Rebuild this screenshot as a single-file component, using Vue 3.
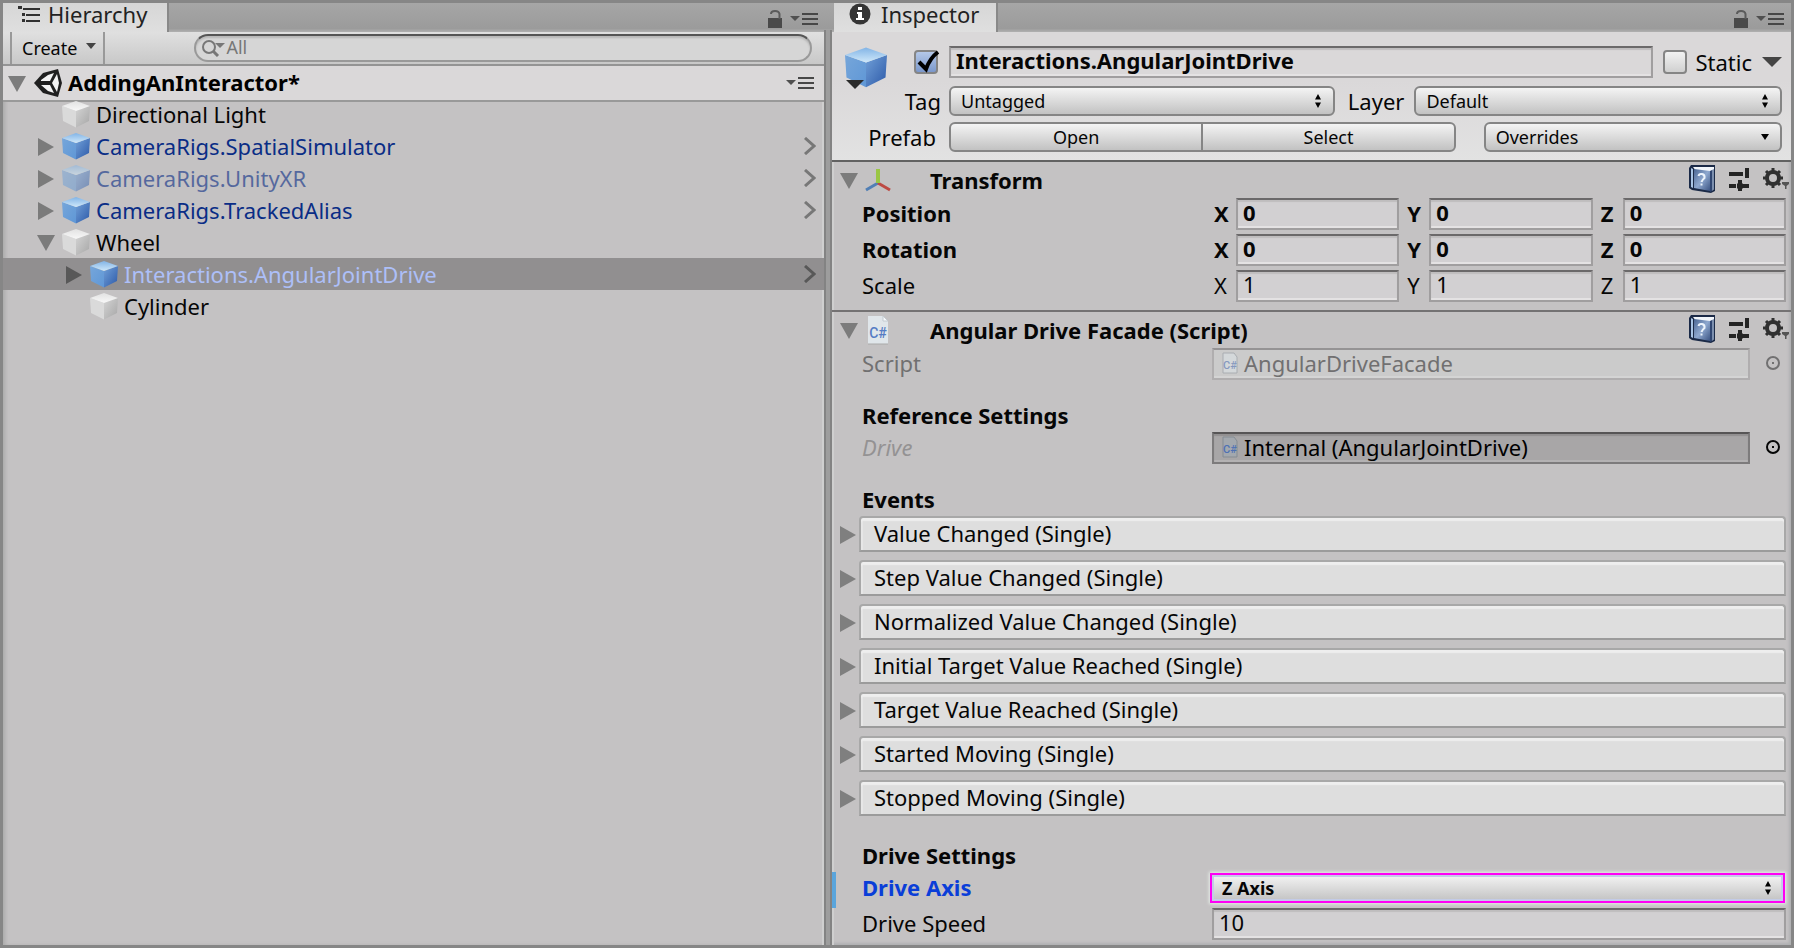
<script setup>
import { ref } from 'vue'

const nodes = [
  { name: 'Directional Light', depth: 0, kind: 'plain', arrow: '' },
  { name: 'CameraRigs.SpatialSimulator', depth: 0, kind: 'prefab', arrow: 'right' },
  { name: 'CameraRigs.UnityXR', depth: 0, kind: 'prefab', arrow: 'right', inactive: true },
  { name: 'CameraRigs.TrackedAlias', depth: 0, kind: 'prefab', arrow: 'right' },
  { name: 'Wheel', depth: 0, kind: 'plain', arrow: 'down' },
  { name: 'Interactions.AngularJointDrive', depth: 1, kind: 'prefab', arrow: 'right', selected: true },
  { name: 'Cylinder', depth: 1, kind: 'plain', arrow: '' },
]

const vectors = ref([
  { label: 'Position', bold: true, axes: { X: '0', Y: '0', Z: '0' } },
  { label: 'Rotation', bold: true, axes: { X: '0', Y: '0', Z: '0' } },
  { label: 'Scale', bold: false, axes: { X: '1', Y: '1', Z: '1' } },
])

const events = [
  'Value Changed (Single)',
  'Step Value Changed (Single)',
  'Normalized Value Changed (Single)',
  'Initial Target Value Reached (Single)',
  'Target Value Reached (Single)',
  'Started Moving (Single)',
  'Stopped Moving (Single)',
]

const objectName = ref('Interactions.AngularJointDrive')
const active = ref(true)
const isStatic = ref(false)
const search = ref('')
const driveSpeed = ref('10')
</script>

<template>
  <div class="editor">
    <svg class="sprite" aria-hidden="true">
      <defs>
        <linearGradient id="blueTop" x1="0" y1="0" x2="0" y2="1"><stop offset="0" stop-color="#82b4e6" /><stop offset="1" stop-color="#cfe8fa" /></linearGradient>
        <linearGradient id="blueLeft" x1="0" y1="0" x2="1" y2="1"><stop offset="0" stop-color="#76a6da" /><stop offset="1" stop-color="#5f97d6" /></linearGradient>
        <linearGradient id="blueRight" x1="0" y1="0" x2="1" y2="1"><stop offset="0" stop-color="#71a0d8" /><stop offset="1" stop-color="#2c59a8" /></linearGradient>
        <linearGradient id="greyTop" x1="0" y1="0" x2="0" y2="1"><stop offset="0" stop-color="#e2e2e2" /><stop offset="1" stop-color="#f8f8f8" /></linearGradient>
        <linearGradient id="greyRight" x1="0" y1="0" x2="1" y2="1"><stop offset="0" stop-color="#d4d4d4" /><stop offset="1" stop-color="#a6a6a6" /></linearGradient>
        <linearGradient id="bookCover" x1="0" y1="0" x2="1" y2="1"><stop offset="0" stop-color="#4a6592" /><stop offset=".5" stop-color="#8ea8cf" /><stop offset="1" stop-color="#3a5382" /></linearGradient>
      </defs>
      <symbol id="cube-prefab" viewBox="0 0 28 28">
        <path d="M0 6 14 11V27.500L1 21Z" fill="url(#blueLeft)" />
        <path d="M28 6 14 11V27.500L27 21Z" fill="url(#blueRight)" />
        <path d="M14 1 28 6 14 11 0 6Z" fill="url(#blueTop)" />
      </symbol>
      <symbol id="cube-plain" viewBox="0 0 28 28">
        <path d="M0 6 14 11V27.500L1 21Z" fill="#dadada" />
        <path d="M28 6 14 11V27.500L27 21Z" fill="url(#greyRight)" />
        <path d="M14 1 28 6 14 11 0 6Z" fill="url(#greyTop)" />
      </symbol>
      <symbol id="fold-right" viewBox="0 0 18 20"><path d="M1 2 17 11 1 20Z" fill="currentColor" /></symbol>
      <symbol id="fold-down" viewBox="0 0 18 20"><path d="M0 3H18L9 19Z" fill="currentColor" /></symbol>
      <symbol id="lock" viewBox="0 0 14 18">
        <path d="M0 8H14V18H0Z" fill="#4a4a4a" /><path d="M3 4Q3 1 7 1T11.500 4V9" fill="none" stroke="#5b5b5b" stroke-width="2" />
      </symbol>
      <symbol id="menu" viewBox="0 0 28 12">
        <path d="M0 3H10L5 8Z" fill="#505050" /><path d="M12 1H28M12 6H28M12 11H28" stroke="#474747" stroke-width="2" />
      </symbol>
      <symbol id="updown" viewBox="0 0 8 14"><path d="M4 0 7 5.500H1ZM4 14 1 8.500H7Z" fill="#000" /></symbol>
      <symbol id="book" viewBox="0 0 26 28">
        <path d="M2 0H26V26L22 28 3 25 0 23V3Z" fill="#1b2a47" />
        <path d="M4 2H25V24L22 26Z" fill="#f2f6fb" />
        <path d="M2 3 4 4V23L2 22Z" fill="#a9c4e4" />
        <path d="M5 4 21 6V26L5 23Z" fill="url(#bookCover)" />
        <path d="M21 6 23 5V26L21 27Z" fill="#2f4570" />
        <path d="M23 5 25 4V24L23 26Z" fill="#7c8fae" />
        <path d="M9.500 11Q10 8.500 13 9T15.500 13Q13 15 12.500 17" fill="none" stroke="#edf4fc" stroke-width="2" />
        <path d="M11.500 18.500H13.500V20.500H11.500Z" fill="#edf4fc" />
      </symbol>
      <symbol id="sliders" viewBox="0 0 20 24">
        <path d="M0 7H14M0 19H7M13 19H20" stroke="#242424" stroke-width="4" />
        <path d="M18 1V11M11 13V24" stroke="#242424" stroke-width="4" /><path d="M8 19H14" stroke="#242424" stroke-width="5" />
      </symbol>
      <symbol id="gear" viewBox="0 0 26 24">
        <circle cx="10" cy="11" r="6" fill="none" stroke="#303030" stroke-width="4" />
        <path d="M10 1V5M10 17V21M0 11H4M16 11H20M3 4 6 7M14 15 17 18M17 4 14 7M6 15 3 18" stroke="#303030" stroke-width="3" />
        <path d="M19 15H26V17L23.500 19V22H22V19L19 17Z" fill="#555" />
      </symbol>
      <symbol id="target" viewBox="0 0 16 16">
        <circle cx="8" cy="8" r="6" fill="none" stroke="currentColor" stroke-width="2" /><path d="M7 7H9V9H7Z" fill="currentColor" />
      </symbol>
    </svg>

    <section class="panel hierarchy" aria-label="Hierarchy">
      <div class="tabbar">
        <button class="tab">
          <svg width="22" height="18" viewBox="0 0 22 18"><path d="M5 4H22M8 10H22M8 16H22" stroke="#303030" stroke-width="2" /><path d="M0 1H4V4H0ZM4 8H7V11H4ZM4 14H7V17H4Z" fill="#303030" /></svg>
          Hierarchy
        </button>
        <span class="tab-tools">
          <button aria-label="Lock"><svg width="14" height="18"><use href="#lock" /></svg></button>
          <button aria-label="Hierarchy menu"><svg width="28" height="12"><use href="#menu" /></svg></button>
        </span>
      </div>
      <div class="toolbar">
        <button class="create">Create <svg width="10" height="6" viewBox="0 0 10 6"><path d="M0 0H10L5 6Z" fill="#444" /></svg></button>
        <label class="search">
          <svg width="24" height="18" viewBox="0 0 24 18"><circle cx="8" cy="8" r="6" fill="none" stroke="#777" stroke-width="2" /><path d="M12 12 17 17" stroke="#777" stroke-width="3" /><path d="M14 4H24L19 9Z" fill="#777" /></svg>
          <input v-model="search" type="text" placeholder="All" aria-label="Search hierarchy" />
        </label>
      </div>
      <div class="scene">
        <button class="fold" aria-label="Collapse scene"><svg width="18" height="20"><use href="#fold-down" /></svg></button>
        <svg width="30" height="30" viewBox="0 0 30 30">
          <path d="M1 15 10 5 25 1 29 15 25 29 10 25Z" fill="#202020" />
          <path d="M8 12 15 7 21 5 17 13H8ZM8 17H17L21 25 15 23ZM19 15 24 6 26 15 24 24Z" fill="#f4f4f4" />
        </svg>
        <h1>AddingAnInteractor*</h1>
        <button class="scene-menu" aria-label="Scene menu"><svg width="28" height="12"><use href="#menu" /></svg></button>
      </div>
      <ul class="tree">
        <li v-for="n in nodes" :key="n.name" :class="[n.kind, { selected: n.selected, inactive: n.inactive, nested: n.depth }]">
          <span class="arrow"><svg v-if="n.arrow" width="18" height="20"><use :href="'#fold-' + n.arrow" /></svg></span>
          <svg class="cube" width="28" height="28"><use :href="'#cube-' + n.kind" /></svg>
          <button class="node">{{ n.name }}</button>
          <svg v-if="n.kind === 'prefab'" class="chevron" width="12" height="18" viewBox="0 0 12 18"><path d="M1 1 10 9 1 17" fill="none" stroke="currentColor" stroke-width="3" /></svg>
        </li>
      </ul>
    </section>

    <div class="divider"></div>

    <section class="panel inspector" aria-label="Inspector">
      <div class="tabbar">
        <button class="tab">
          <svg width="22" height="22" viewBox="0 0 22 22"><circle cx="11" cy="11" r="10.500" fill="#353535" /><path d="M9 4H13V7H9ZM8 9H13V15H15V17H7V15H9V11H8Z" fill="#fff" /></svg>
          Inspector
        </button>
        <span class="tab-tools">
          <button aria-label="Lock"><svg width="14" height="18"><use href="#lock" /></svg></button>
          <button aria-label="Inspector menu"><svg width="28" height="12"><use href="#menu" /></svg></button>
        </span>
      </div>

      <div class="object-header">
        <div class="identity">
          <svg width="46" height="44" viewBox="0 0 46 44"><use href="#cube-prefab" x="3" width="42" height="42" /><path d="M4 34H22L13 43Z" fill="#2b2b2b" /></svg>
          <label class="check">
            <input v-model="active" type="checkbox" aria-label="Active" />
            <svg v-if="active" width="26" height="24" viewBox="0 0 26 24"><path d="M5 12 12 19Q16 8 24 2" fill="none" stroke="#000" stroke-width="4" /></svg>
          </label>
        </div>
        <div class="line">
          <input v-model="objectName" class="field name" type="text" aria-label="Name" />
          <label class="static"><span class="check"><input v-model="isStatic" type="checkbox" /></span>Static</label>
          <button aria-label="Static flags"><svg width="20" height="10" viewBox="0 0 20 10"><path d="M0 0H20L10 10Z" fill="#444" /></svg></button>
        </div>
        <label class="head-label" for="tag">Tag</label>
        <div class="line">
          <span class="dropdown tag"><select id="tag"><option>Untagged</option></select><svg width="8" height="14"><use href="#updown" /></svg></span>
          <label class="layer-label" for="layer">Layer</label>
          <span class="dropdown layer"><select id="layer"><option>Default</option></select><svg width="8" height="14"><use href="#updown" /></svg></span>
        </div>
        <span class="head-label prefab-label">Prefab</span>
        <div class="line">
          <div class="pair"><button>Open</button><button>Select</button></div>
          <span class="dropdown overrides"><select aria-label="Overrides"><option>Overrides</option></select><svg width="8" height="6" viewBox="0 0 8 6"><path d="M0 0H8L4 6Z" /></svg></span>
        </div>
      </div>

      <section class="component">
        <header>
          <button class="fold" aria-label="Collapse Transform"><svg width="18" height="20"><use href="#fold-down" /></svg></button>
          <svg class="kind" width="28" height="26" viewBox="0 0 28 26">
            <path d="M14 16 2 23" stroke="#517fb5" stroke-width="3" /><path d="M14 16 26 23" stroke="#bd4a44" stroke-width="3" /><path d="M14 2V16" stroke="#9ac644" stroke-width="4" />
          </svg>
          <h2>Transform</h2>
          <span class="tools">
            <button aria-label="Help"><svg width="26" height="28"><use href="#book" /></svg></button>
            <button aria-label="Presets"><svg width="20" height="24"><use href="#sliders" /></svg></button>
            <button aria-label="Settings"><svg width="26" height="24"><use href="#gear" /></svg></button>
          </span>
        </header>
        <div v-for="v in vectors" :key="v.label" class="row" :class="{ bold: v.bold }">
          <span class="row-label">{{ v.label }}</span>
          <div class="vector">
            <label v-for="(val, axis) in v.axes" :key="axis"><span>{{ axis }}</span><input v-model="v.axes[axis]" class="field" type="text" /></label>
          </div>
        </div>
      </section>

      <section class="component facade">
        <header>
          <button class="fold" aria-label="Collapse Angular Drive Facade"><svg width="18" height="20"><use href="#fold-down" /></svg></button>
          <svg class="kind" width="28" height="30" viewBox="0 0 28 30">
            <path d="M4 1H19L24 6V29H4Z" fill="#e0e6ea" /><path d="M19 1V6H24Z" fill="#f8fafc" stroke="#c2cad0" /><path d="M4 29H24" stroke="#aaa" />
            <text x="14" y="23" text-anchor="middle" class="page-text">C#</text>
          </svg>
          <h2>Angular Drive Facade (Script)</h2>
          <span class="tools">
            <button aria-label="Help"><svg width="26" height="28"><use href="#book" /></svg></button>
            <button aria-label="Presets"><svg width="20" height="24"><use href="#sliders" /></svg></button>
            <button aria-label="Settings"><svg width="26" height="24"><use href="#gear" /></svg></button>
          </span>
        </header>
        <div class="row dim">
          <span class="row-label">Script</span>
          <div class="object">
            <button class="field" disabled>
              <svg width="16" height="22" viewBox="0 0 16 22"><path d="M1 1H12L15 5V21H1Z" fill="#dde3e8" stroke="#8f969d" /><text x="8" y="17" text-anchor="middle" class="mini-text">C#</text></svg>AngularDriveFacade
            </button>
            <button class="pick" aria-label="Pick script" disabled><svg width="16" height="16"><use href="#target" /></svg></button>
          </div>
        </div>
        <h3>Reference Settings</h3>
        <div class="row">
          <span class="row-label ghost">Drive</span>
          <div class="object dark">
            <button class="field">
              <svg width="16" height="22" viewBox="0 0 16 22"><path d="M1 1H12L15 5V21H1Z" fill="#a3a8ae" stroke="#858c93" /><text x="8" y="17" text-anchor="middle" class="mini-text">C#</text></svg>Internal (AngularJointDrive)
            </button>
            <button class="pick" aria-label="Pick drive"><svg width="16" height="16"><use href="#target" /></svg></button>
          </div>
        </div>
        <h3>Events</h3>
        <div class="events">
          <button v-for="e in events" :key="e" class="event">
            <svg width="18" height="20"><use href="#fold-right" /></svg><span>{{ e }}</span>
          </button>
        </div>
        <h3>Drive Settings</h3>
        <div class="row bold changed">
          <label class="row-label" for="axis">Drive Axis</label>
          <span class="dropdown axis"><select id="axis"><option>Z Axis</option></select><svg width="8" height="14"><use href="#updown" /></svg></span>
        </div>
        <div class="row">
          <label class="row-label" for="speed">Drive Speed</label>
          <input id="speed" v-model="driveSpeed" class="field" type="text" />
        </div>
      </section>
    </section>
  </div>
</template>

<style>
body {
  background: #c4c2c3;
}
</style>

<style scoped>
* {
  box-sizing: border-box;
}
.editor {
  display: grid;
  grid-template-columns: minmax(0, 821fr) 8px minmax(0, 959fr);
  min-height: 100vh;
  border: 3px solid #868686;
  background: #c4c2c3;
  font: 22px/30px "Noto Sans", "Open Sans", sans-serif;
  color: #060606;
}
.sprite {
  position: absolute;
  width: 0;
  height: 0;
}
svg {
  display: block;
  flex: none;
}
button,
input,
select {
  font: inherit;
  color: inherit;
  margin: 0;
  padding: 0;
  border: 0;
  border-radius: 0;
  background: none;
  outline: 0;
  text-align: left;
  min-width: 0;
}
h1,
h2,
h3,
ul {
  margin: 0;
  padding: 0;
  font-size: 22px;
  list-style: none;
}
.divider {
  margin-top: 27px;
  background: #9d9d9d;
  border: solid #838383;
  border-width: 0 2px;
}
.hierarchy {
  box-shadow: inset -2px 0 #cfcfcf, inset 3px 0 4px -1px #a9a9a9;
}
.inspector {
  box-shadow: inset 2px 0 #cfcfcf, inset -4px -4px 3px -2px #afb0b2;
}
.tabbar {
  display: flex;
  justify-content: space-between;
  height: 29px;
  margin-right: -8px;
  background: linear-gradient(#a6a6a6, #9b9b9b 88%, #b0b0b0);
}
.inspector .tabbar {
  margin-right: 0;
  padding-left: 2px;
}
.tab {
  display: flex;
  align-items: center;
  gap: 8px;
  height: 29px;
  padding: 0 20px 7px 15px;
  background: linear-gradient(#d6d6d6, #dfdfdf);
  border-right: 2px solid #898989;
  color: #222;
}
.inspector .tab {
  gap: 10px;
  padding-right: 17px;
}
.tab-tools {
  display: flex;
  align-items: center;
  gap: 8px;
  padding: 2px 14px 0 0;
}
.inspector .tab-tools {
  padding-right: 7px;
}
.toolbar {
  display: flex;
  justify-content: space-between;
  height: 34px;
  padding: 0 12px 0 7px;
  border-bottom: 2px solid #949494;
  background: linear-gradient(#e0e0e0, #c8c8c8);
  font-size: 18px;
}
.create {
  display: flex;
  align-items: center;
  gap: 9px;
  padding: 0 7px 0 10px;
  border: solid #999;
  border-width: 0 2px;
}
.create svg {
  margin-bottom: 4px;
}
.search {
  display: flex;
  align-items: center;
  width: 77%;
  height: 28px;
  margin-top: 2px;
  padding-left: 5px;
  border: 2px solid #999;
  border-top-color: #555;
  border-radius: 14px;
  background: #d6d6d6;
  box-shadow: inset 0 2px 2px #b8b8b8;
}
.search input {
  flex: 1;
  height: 24px;
  padding: 0 0 2px 1px;
}
.search input::placeholder {
  color: #777;
  opacity: 1;
}
.scene {
  display: flex;
  align-items: center;
  height: 36px;
  padding: 0 10px 0 5px;
  border-bottom: 2px solid #999;
  background: #dad8d9;
}
.fold {
  color: #7c7c7c;
}
.scene .fold {
  margin-right: 7px;
}
.scene h1 {
  margin-left: 5px;
  padding-bottom: 2px;
  color: #000;
}
.scene-menu {
  margin-left: auto;
}
.tree {
  margin-top: -4px;
}
.tree li {
  display: flex;
  align-items: center;
  height: 32px;
  padding: 0 8px 0 34px;
}
.tree .nested {
  padding-left: 62px;
}
.arrow {
  width: 25px;
  color: #7b7b7b;
}
.node {
  flex: 1;
  margin-left: 6px;
}
.prefab {
  color: #0a2d86;
}
.inactive .node {
  opacity: 0.6;
}
.inactive .cube {
  opacity: 0.5;
}
.chevron {
  color: #777;
}
.selected {
  background: #918f90;
  color: #adbff8;
}
.selected .arrow,
.selected .chevron {
  color: #585858;
}

.object-header {
  display: grid;
  grid-template-columns: 107px minmax(0, 1fr);
  grid-template-rows: 34px 30px 30px;
  align-items: start;
  gap: 6px 8px;
  padding: 14px 9px 8px 2px;
  border-bottom: 2px solid #626262;
  background: linear-gradient(#dad8d9 38%, #e2e2e2);
}
.identity {
  display: flex;
  justify-content: space-between;
  align-items: flex-start;
  height: 32px;
  padding: 0 1px 0 8px;
}
.check {
  display: grid;
  flex: none;
  width: 26px;
  height: 24px;
  align-self: center;
}
.check > * {
  grid-area: 1 / 1;
}
.check input {
  appearance: none;
  width: 24px;
  height: 24px;
  border: 2px solid #858585;
  border-radius: 4px;
  background: linear-gradient(#f2f2f2, #d0d0d0);
}
.check input:checked {
  background: linear-gradient(#b4c8e8, #7b98cc);
}
.line {
  display: flex;
  align-items: center;
}
.field {
  display: block;
  flex: 1;
  height: 32px;
  padding: 0 6px 4px 5px;
  border: 2px solid #a09e9f;
  border-top-color: #6b696a;
  background: #d2d0d2;
  box-shadow: inset 0 2px 1px #bfbdbe, inset 0 -2px #e4e2e3;
}
.name {
  font-weight: 700;
  background: #dad8d9;
}
.static {
  display: flex;
  align-items: center;
  gap: 6px;
  margin: 0 10px;
}
.head-label {
  justify-self: end;
}
.prefab-label {
  margin-right: 5px;
}
.layer-label {
  margin: 0 10px 0 13px;
}
.dropdown {
  display: flex;
  align-items: center;
  height: 30px;
  padding-right: 11px;
  border: 2px solid #858585;
  border-radius: 6px;
  background: linear-gradient(#f4f4f4, #c2c2c2);
  font-size: 18px;
}
.dropdown select {
  appearance: none;
  flex: 1;
  height: 26px;
  padding-left: 10px;
  line-height: 26px;
}
.tag {
  flex: 387 1 0;
}
.layer {
  flex: 368 1 0;
}
.pair {
  display: flex;
  flex: 502 1 0;
  height: 30px;
  margin-right: 28px;
  border: 2px solid #858585;
  border-radius: 6px;
  background: linear-gradient(#f4f4f4, #c2c2c2);
  font-size: 18px;
}
.pair button {
  flex: 1;
  line-height: 24px;
  text-align: center;
}
.pair button + button {
  border-left: 2px solid #858585;
}
.overrides {
  flex: 283 1 0;
}

.component {
  border-bottom: 2px solid #747273;
  padding: 0 5px 4px 0;
}
.facade {
  padding-bottom: 0;
  border-bottom: 0;
}
.component header {
  display: flex;
  align-items: center;
  height: 36px;
  padding-left: 8px;
}
.kind {
  margin-left: 6px;
}
.component h2 {
  margin-left: 38px;
}
.tools {
  display: flex;
  align-items: center;
  gap: 14px;
  margin: -2px -3px 0 auto;
}
.row {
  display: grid;
  grid-template-columns: minmax(0, 380fr) minmax(0, 574fr);
  align-items: start;
  height: 36px;
}
.row-label {
  padding-left: 30px;
}
.bold {
  font-weight: 700;
}
.vector {
  display: grid;
  grid-template-columns: repeat(3, minmax(0, 1fr));
  gap: 6px;
}
.vector label {
  display: flex;
}
.vector span {
  width: 24px;
  padding-left: 2px;
}
.object {
  display: flex;
  align-items: flex-start;
}
.object .field {
  display: flex;
  align-items: center;
  gap: 6px;
  padding: 0 8px 2px;
  color: #000;
}
.page-text,
.mini-text {
  font: 500 14px Roboto, sans-serif;
  fill: #557cc4;
}
.mini-text {
  font-size: 11px;
  fill: #4e70b4;
}
.pick {
  width: 16px;
  height: 30px;
  margin: 0 5px 0 15px;
}
.dark .field {
  border-color: #7d7b7c;
  border-top-color: #575556;
  background: #a8a6a7;
  box-shadow: inset 0 2px 1px #929091, inset 0 -2px #b4b2b3;
}
.dim,
.dim .field,
.dim .pick {
  color: #717071;
}
.dim .field {
  border-color: #b0aeaf;
  border-top-color: #959394;
  background: #cbcbcb;
  box-shadow: inset 0 -2px #d4d4d4;
}
.dim .field svg {
  opacity: 0.55;
}
.ghost {
  color: #949293;
  font-style: italic;
}
h3 {
  margin: 16px 0 2px 30px;
}
.events {
  display: grid;
  gap: 8px;
  margin-bottom: 24px;
}
.event {
  display: flex;
  align-items: center;
  height: 36px;
  padding-left: 7px;
}
.event svg {
  color: #7f7f7f;
}
.event span {
  flex: 1;
  height: 36px;
  margin-left: 2px;
  padding-left: 13px;
  border: 2px solid #a8a8a8;
  border-bottom-color: #9b9b9b;
  border-radius: 4px 4px 0 0;
  background: #dedede;
  box-shadow: inset 0 3px 1px #eee, inset 2px 0 #e6e6e6;
}
.changed {
  background: linear-gradient(#5aa5dc, #5aa5dc) left / 4px 100% no-repeat;
}
.changed .row-label {
  color: #0a3ed8;
}
.axis {
  margin: 1px 1px 0 -2px;
  border-color: #ff00f4;
  border-radius: 0;
  box-shadow: 0 0 3px 1px #e6eee8, inset 0 0 0 2px #c3cbe8;
}
</style>
